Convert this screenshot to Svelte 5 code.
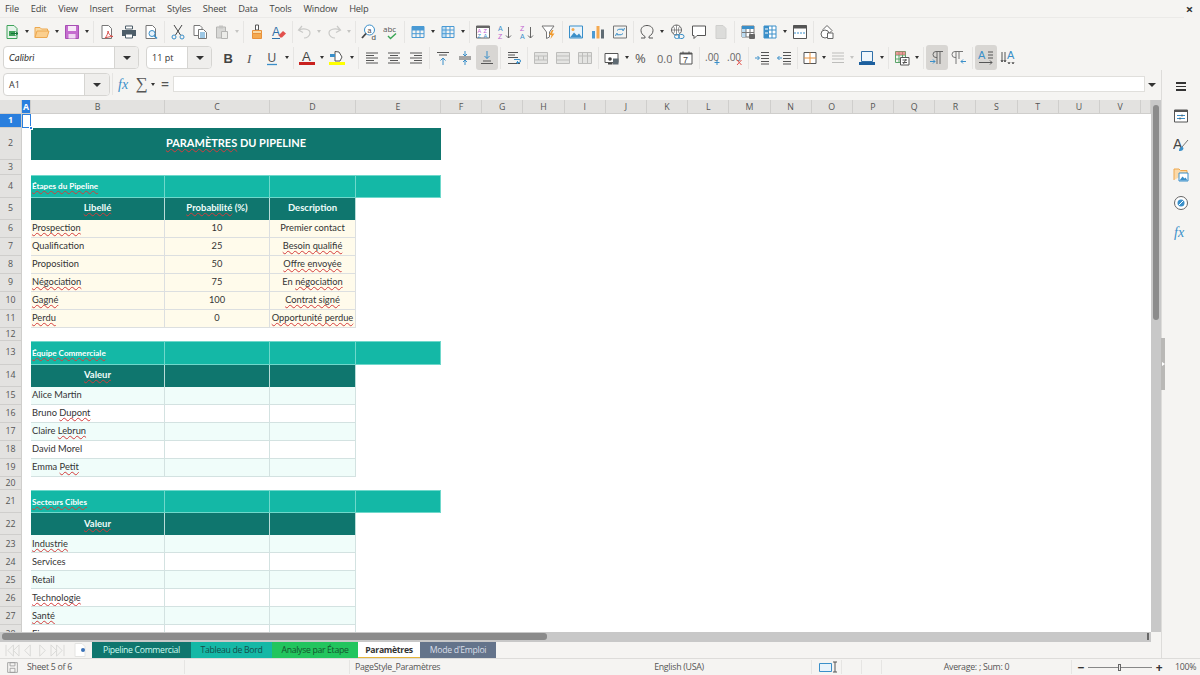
<script>
	const menus = ['File', 'Edit', 'View', 'Insert', 'Format', 'Styles', 'Sheet', 'Data', 'Tools', 'Window', 'Help'];

	// toolbar tokens: a = drop arrow, ag = greyed drop arrow, | = separator, the rest are icon names
	const bar1 = 'new a open a save a | pdf print preview | cut copy paste ag | clone clear | undo ag redo ag | find spell | rows a cols a | sort asc desc filter | image chart pivot | omega a link comment note | freeze freezecol a split | shapes'.split(' ');
	const bar2 = 'bold italic under a | fcolor a hilite a | left center right | top mid bottom | wrap | merge mergec unmerge | money a percent number date | adddec deldec | indent outdent | border a bstyle ag bcolor a | cond a | ltr rtl | tb tbv'.split(' ');
	const narrow = ['undo', 'border', 'bstyle'];
	const active = ['bottom', 'ltr', 'tb'];
	const side = ['props', 'styles', 'gallery', 'navigator', 'functions'];

	const line = (x1, y1, x2, y2, c = '#555') => `<path d="M${x1} ${y1}L${x2} ${y2}" stroke="${c}" fill="none"/>`;
	const lines = (rows, c = '#555') => rows.map(r => line(r[0], r[1], r[2], r[1], c)).join('');
	const grid = c => `<path d="M2 2.500h12v11H2zM2 6h12M2 9.700h12M6 2.500v11M10 2.500v11" stroke="${c}" fill="none"/>`;

	const icons = {
		new: `<path d="M3 1.500h7l3 3v10H3z" fill="#e6f4ea" stroke="#3fa35a"/><path d="M5 7h6v5H5z" fill="#3fa35a"/><path d="M7 9.500h7M11.500 7.500l2.500 2-2.500 2" stroke="#16763a" fill="none"/>`,
		open: `<path d="M1 13.500v-10h5l1.500 1.500h6v2" fill="#f8d9a4" stroke="#eda84f"/><path d="M1 13.500l2-6.500h12l-2 6.500z" fill="#fbcf8e" stroke="#eda84f"/>`,
		save: `<path d="M1.500 1.500h13v13h-13z" fill="#c56ccf" stroke="#a64fb3"/><path d="M4 2h8v5H4z" fill="#f7e8f8"/><path d="M4.500 10h7v4.500h-7z" fill="#f0d7f2"/>`,
		pdf: `<path d="M3 1.500h6.500l3 3v10H3z" fill="#fff" stroke="#777"/><path d="M6 14c2-2 3-5 3-7 .5 3 2 5 5 5.500-3 0-5 .5-8 1.500z" fill="none" stroke="#d9534f"/>`,
		print: `<path d="M4.500 2h7v3h-7z" fill="#fff" stroke="#4d5d68"/><path d="M1 6h14v6H1z" fill="#4d5d68"/><path d="M4.500 10h7v4h-7z" fill="#fff" stroke="#4d5d68"/>`,
		preview: `<path d="M3 1.500h6.500l3 3v10H3z" fill="#fff" stroke="#777"/><circle cx="9" cy="9.500" r="3" fill="#e8f3fb" stroke="#3a8fc9"/><path d="M11 11.500l3 3" stroke="#3a8fc9" stroke-width="1.500"/>`,
		cut: `<path d="M4 1l6.500 10M12 1L5.500 11" stroke="#444" fill="none"/><circle cx="4" cy="13" r="2" fill="none" stroke="#3a8fc9"/><circle cx="12" cy="13" r="2" fill="none" stroke="#3a8fc9"/>`,
		copy: `<path d="M2 1.500h6l2 2v8H2z" fill="#fff" stroke="#777"/><path d="M6.500 5.500h5l3 3v6h-8z" fill="#fff" stroke="#777"/>${lines([[8, 9, 13], [8, 11, 13], [8, 13, 13]], '#3a8fc9')}`,
		paste: `<path d="M2.500 3h9v11h-9z" fill="#d8d8d6" stroke="#b5b5b3"/><path d="M5 1.500h4v3H5z" fill="#c4c4c2"/><path d="M7.500 7.500h6v7h-6z" fill="#ecece9" stroke="#b5b5b3"/>`,
		clone: `<path d="M6.500 1h3v5h-3z" fill="#fff" stroke="#555"/><path d="M3.500 6.500h9v3h-9z" fill="#f8d9a4" stroke="#e8913a"/><path d="M3.500 9.500h9v5h-9z" fill="#f4a950" stroke="#e8913a"/>`,
		clear: `<text x="1" y="12" font-size="12" font-family="Liberation Sans" fill="#2f6fa8">A</text><path d="M8 11l4-4 3 2.500-4 4H9z" fill="#e2504c"/><path d="M1 14.500h8" stroke="#2f6fa8"/>`,
		undo: `<path d="M5 2L1.500 6 6 8.500M2 6c5-2 11-1 11 3 0 3-3 5-6 5" stroke="#c9c9c7" fill="none" stroke-width="1.200"/>`,
		redo: `<path d="M11 2l3.500 4L10 8.500M14 6C9 4 3 5 3 9c0 3 3 5 6 5" stroke="#c9c9c7" fill="none" stroke-width="1.200"/>`,
		find: `<circle cx="8.500" cy="6" r="5" fill="#fff" stroke="#3a8fc9"/><path d="M5 9.500l-4 4.500" stroke="#444" stroke-width="1.800"/><text x="6.500" y="8.500" font-size="7" font-family="Liberation Sans" fill="#444">a</text><text x="10.500" y="15.500" font-size="8" font-family="Liberation Sans" fill="#444">d</text>`,
		spell: `<text x="0" y="8" font-size="8" font-family="Open Sans" fill="#555">abc</text><path d="M5 12l2.500 2.500L13 9.500" stroke="#3aa655" fill="none" stroke-width="1.400"/>`,
		rows: `<path d="M2 2.500h12v3.500H2z" fill="#4a9ad4"/>${grid('#4a9ad4')}`,
		cols: `<path d="M2 2.500h4v11H2z" fill="#bcdcf2"/>${grid('#4a9ad4')}`,
		sort: `<path d="M1.500 2h13v12h-13z" fill="#fff" stroke="#666"/><path d="M1.500 2h13v2h-13z" fill="#666"/><text x="2.500" y="9" font-size="5.500" font-family="Liberation Sans" fill="#c05fd0">A</text><text x="8.500" y="9" font-size="5.500" font-family="Liberation Sans" fill="#c05fd0">Z</text><text x="2.500" y="14" font-size="5.500" font-family="Liberation Sans" fill="#3a8fc9">Z</text><text x="8.500" y="14" font-size="5.500" font-family="Liberation Sans" fill="#3a8fc9">A</text>`,
		asc: `<text x="1" y="7" font-size="7" font-family="Liberation Sans" fill="#3a8fc9">A</text><text x="1" y="14.500" font-size="7" font-family="Liberation Sans" fill="#c05fd0">Z</text><path d="M11.500 3v11M9 11.500l2.500 2.500 2.500-2.500" stroke="#666" fill="none"/>`,
		desc: `<text x="1" y="7" font-size="7" font-family="Liberation Sans" fill="#c05fd0">Z</text><text x="1" y="14.500" font-size="7" font-family="Liberation Sans" fill="#3a8fc9">A</text><path d="M11.500 3v11M9 11.500l2.500 2.500 2.500-2.500" stroke="#666" fill="none"/>`,
		filter: `<path d="M1 2h12L8.500 8v5l-3 1.500V8z" fill="#fff" stroke="#777"/><path d="M11 6l-3 5h2.500l-1 4 4-5.500h-2.500l1.500-3.500z" fill="#f09a2e"/>`,
		image: `<path d="M1.500 2h13v12h-13z" fill="#eaf4fb" stroke="#3a8fc9"/><circle cx="5" cy="5.500" r="1.500" fill="#f4a950"/><path d="M2 13.500l4-5 3 3 2-2 3 4z" fill="#3a8fc9"/>`,
		chart: `<path d="M2 7h3v7.500H2z" fill="#4a9ad4"/><path d="M6.500 2h3v12.500h-3z" fill="#f4a950"/><path d="M11 5.500h3v9h-3z" fill="#5f6b73"/>`,
		pivot: `<path d="M1.500 2h13v12h-13z" fill="#f2f2f0" stroke="#777"/><path d="M5 6.500a4 4 0 0 1 6 0M11 9.500a4 4 0 0 1-6 0" stroke="#3a8fc9" fill="none"/><path d="M10 4.500l1.500 2 1-2.500M6 11.500l-1.500-2-1 2.500" stroke="#3a8fc9" fill="none"/>`,
		omega: `<path d="M2 14h4v-1.500C3.500 11 2 9 2 6.500 2 3.500 4.500 1.500 8 1.500s6 2 6 5c0 2.500-1.500 4.500-4 6V14h4" stroke="#555" fill="none"/>`,
		link: `<circle cx="7.500" cy="6" r="5" fill="#fff" stroke="#666"/><path d="M2.500 6h10M7.500 1v10M4.500 2.500c1.500 2 1.500 5 0 7M10.500 2.500c-1.500 2-1.500 5 0 7" stroke="#666" fill="none" stroke-width=".7"/><rect x="5.500" y="10.500" width="5" height="4" rx="2" fill="none" stroke="#3a8fc9"/><rect x="9.500" y="10.500" width="5.500" height="4" rx="2" fill="none" stroke="#3a8fc9"/>`,
		comment: `<path d="M1.500 2h13v9.500H6L3 14.500v-3H1.500z" fill="#fff" stroke="#555"/>`,
		note: `<path d="M3 1.500h7l3 3v10H3z" fill="#dcdcda" stroke="#cfcfcd"/>`,
		freeze: `<path d="M2 2h12v11H2z" fill="#fff" stroke="#777"/><path d="M2 2h12v3H2z" fill="#3a8fc9"/><path d="M2 5h4v8H2z" fill="#bcdcf2"/><path d="M2 8.500h12M6 5v8M10 5v8" stroke="#777" fill="none"/><rect x="9" y="10" width="6" height="5" rx="1" fill="#666"/>`,
		freezecol: `<path d="M2 2h12v12H2z" fill="#fff" stroke="#3a8fc9"/><path d="M2 2h5v12H2z" fill="#3a8fc9"/><path d="M2 6h12M2 10h12M10 2v12" stroke="#3a8fc9" fill="none"/><path d="M3 5h3M3 9h3" stroke="#fff" fill="none"/>`,
		split: `<path d="M1.500 1.500h13v13h-13z" fill="#fff" stroke="#555"/><path d="M1.500 1.500h13v3h-13z" fill="#555"/><path d="M2 9h12" stroke="#3a8fc9" stroke-dasharray="2 1" fill="none"/>`,
		shapes: `<path d="M8 1.500l5 5-4 4-5-5z" fill="#fff" stroke="#666"/><circle cx="6" cy="10" r="4" fill="#fff" stroke="#666"/><path d="M8.500 9h5.500v5.500H8.500z" fill="#fff" stroke="#666"/>`,

		bold: `<text x="3.500" y="13" font-size="13" font-weight="700" font-family="Liberation Sans" fill="#444">B</text>`,
		italic: `<text x="5" y="13" font-size="13" font-style="italic" font-family="Liberation Serif" fill="#555">I</text>`,
		under: `<text x="3.500" y="11.500" font-size="12" font-family="Liberation Sans" fill="#555">U</text><path d="M3 14.500h10" stroke="#3a8fc9" stroke-width="1.300"/>`,
		fcolor: `<text x="3" y="11" font-size="13" font-family="Liberation Sans" fill="#444">A</text><path d="M0 12h16v3H0z" fill="#c9211e"/>`,
		hilite: `<path d="M6 1.500l4 .5 3 5-2 4H6z" fill="#fff" stroke="#555"/><path d="M1 4h5v3H1z" fill="#3a8fc9"/><path d="M0 12h16v3H0z" fill="#ffff00"/>`,
		left: lines([[2, 3, 14], [2, 5.500, 10], [2, 8, 14], [2, 10.500, 10], [2, 13, 14]]),
		center: lines([[2, 3, 14], [4, 5.500, 12], [2, 8, 14], [4, 10.500, 12], [2, 13, 14]]),
		right: lines([[2, 3, 14], [6, 5.500, 14], [2, 8, 14], [6, 10.500, 14], [2, 13, 14]]),
		top: `${lines([[2, 2.500, 14], [4, 5, 12]])}<path d="M8 15V8M5.500 10.500L8 8l2.500 2.500" stroke="#3a8fc9" fill="none"/>`,
		mid: `${lines([[2, 7, 14], [2, 9, 14]])}<path d="M8 1v5M6 4l2 2 2-2M8 15v-5M6 12l2-2 2 2" stroke="#3a8fc9" fill="none"/>`,
		bottom: `${lines([[4, 11, 12], [2, 13.500, 14]])}<path d="M8 1v7.500M5.500 6L8 8.500 10.500 6" stroke="#3a8fc9" fill="none"/>`,
		wrap: `${lines([[2, 2.500, 12], [2, 5, 9], [2, 7.500, 12], [2, 13.500, 14]])}<path d="M8 9.500h5a1.500 1.500 0 0 1 0 3h-2M12 11l-1.500 1.500L12 14" stroke="#3a8fc9" fill="none"/>`,
		merge: `<path d="M1.500 2.500h13v11h-13zM1.500 6h13M1.500 10h13M5.500 6v4M10.500 6v4" fill="#e4e4e2" stroke="#bdbdbb"/>`,
		mergec: `<path d="M1.500 2.500h13v11h-13zM1.500 6h13M1.500 10h13" fill="#e4e4e2" stroke="#bdbdbb"/>`,
		unmerge: `<path d="M1.500 2.500h13v11h-13zM1.500 6h13M5.500 2.500v11M10.500 2.500v11" fill="#e4e4e2" stroke="#bdbdbb"/>`,
		money: `<path d="M1 3.500h13v9H1z" fill="#fff" stroke="#555"/><circle cx="6" cy="9" r="1.800" fill="#444"/><path d="M9 8.500h5.500v6H9z" fill="#5f6b73"/><path d="M4 13h4.500v1.500H4z" fill="#444"/>`,
		percent: `<text x="1" y="13" font-size="13" font-family="Open Sans" fill="#555">%</text>`,
		number: `<text x="1" y="13" font-size="11" font-family="Open Sans" fill="#666">0.0</text>`,
		date: `<path d="M2 3h12v11H2z" fill="#fff" stroke="#555"/><path d="M2 3h12v1.500H2z" fill="#555"/><path d="M5 1.500v2M11 1.500v2" stroke="#555"/><text x="5" y="13" font-size="9" font-family="Liberation Sans" fill="#444">7</text>`,
		adddec: `<text x="0" y="11" font-size="10" font-family="Open Sans" fill="#666">.00</text><path d="M12 10v5M9.500 12.500h5" stroke="#3a8fc9" fill="none"/>`,
		deldec: `<text x="0" y="11" font-size="10" font-family="Open Sans" fill="#666">.00</text><path d="M10 10l4.500 5M14.500 10L10 15" stroke="#e2504c" fill="none"/>`,
		indent: `${lines([[7, 2.500, 15], [7, 5.500, 15], [7, 8.500, 15], [7, 11.500, 15], [7, 14, 15]])}<path d="M1 8h4M3.500 6L5.500 8l-2 2" stroke="#3a8fc9" fill="none"/>`,
		outdent: `${lines([[7, 2.500, 15], [7, 5.500, 15], [7, 8.500, 15], [7, 11.500, 15], [7, 14, 15]])}<path d="M6 8H1.500M3.500 6L1.500 8l2 2" stroke="#3a8fc9" fill="none"/>`,
		border: `<path d="M2 2.500h12v11H2z" fill="#fff" stroke="#555"/><path d="M8 2.500v11M2 8h12" stroke="#e8913a" fill="none"/>`,
		bstyle: lines([[2, 3, 14], [2, 6, 14], [2, 9, 14], [2, 12.500, 14]], '#bdbdbb'),
		bcolor: `<path d="M2.500 1.500h11v10h-11z" fill="#eef6fc" stroke="#2f6fa8"/><path d="M0 12h16v3H0z" fill="#1c5f9e"/>`,
		cond: `<path d="M1.500 1.500h10v11h-10zM1.500 5h10M1.500 9h10M5 1.500v11M8.500 1.500v11" fill="none" stroke="#5aa469"/><path d="M1.500 1.500h10v3.500h-10z" fill="#e57373" opacity=".7"/><path d="M6.500 7.500h8.500v7.500H6.500z" fill="#fff" stroke="#555"/><path d="M8.500 10h4.500M8.500 12.500h4.500M12 9l-2.500 5" stroke="#555" fill="none"/>`,
		ltr: `<path d="M8 2v12M11 2v12M14 1.500H7a3 3 0 0 0 0 6h1" stroke="#666" fill="none"/><path d="M1 11.500h5M4 9.500l2 2-2 2" stroke="#3a8fc9" fill="none"/>`,
		rtl: `<path d="M5 2v12M8 2v7M12 1.500H4a3 3 0 0 0 0 6h1" stroke="#777" fill="none"/><path d="M15 11.500h-5M12 9.500l-2 2 2 2" stroke="#3a8fc9" fill="none"/>`,
		tb: `<text x="0" y="9" font-size="11" font-family="Liberation Sans" fill="#3a8fc9">A</text><path d="M10 2h5M10 5h5M10 8h5M1 12.500h13M12 10.500l2 2-2 2" stroke="#555" fill="none"/>`,
		tbv: `<text x="7" y="9" font-size="11" font-family="Liberation Sans" fill="#3a8fc9">A</text><path d="M2 2v10M5 2v10M1 10l1 2 1-2M4 10l1 2 1-2M8 12l1 2 1-2M12 12l1 2 1-2" stroke="#555" fill="none"/>`,

		props: `<path d="M1.500 2h13v12h-13z" fill="#fff" stroke="#555"/><path d="M1.500 2h13v2h-13z" fill="#555"/><path d="M4 7.500h8M4 10.500h8" stroke="#3a8fc9" fill="none"/><path d="M9 6.500v2M7 9.500v2" stroke="#555" fill="none"/>`,
		styles: `<text x="0" y="12" font-size="14" font-family="Liberation Sans" fill="#444">A</text><path d="M15 3l-6 7" stroke="#777" fill="none"/><path d="M6 14c0-3 1.500-4 3-4.500l1.500 1.500c0 2-2 3.500-4.500 3z" fill="#3a8fc9"/>`,
		gallery: `<path d="M1 14V3h5l1.500 1.500H14V7" fill="#fbd9a8" stroke="#eda84f"/><path d="M6 7h9v8H6z" fill="#fff" stroke="#3a8fc9"/><path d="M6.500 14.500l3-4 2 2 1-1 2 3z" fill="#3a8fc9"/>`,
		navigator: `<circle cx="8" cy="8" r="6.500" fill="#fff" stroke="#666"/><circle cx="8" cy="8" r="3.500" fill="#3a8fc9"/><path d="M5.500 10.500l5-5" stroke="#fff"/>`,
		functions: `<text x="1" y="13" font-size="14" font-style="italic" font-family="Liberation Serif" fill="#3a8fc9">fx</text>`
	};

	const cols = ['F', 'G', 'H', 'I', 'J', 'K', 'L', 'M', 'N', 'O', 'P', 'Q', 'R', 'S', 'T', 'U', 'V', ''];

	const w = t => `<span class="sp">${t}</span>`;
	const band = (n, title) => ({ n, h: 23.3, kind: 'band', cells: [w(title), '', '', ''] });
	const head = (n, cells) => ({ n, h: 22, kind: 'head', cells });
	const gap = (n, h) => ({ n, h, kind: 'gap', cells: [] });
	const row = (n, kind, cells) => ({ n, h: 18, kind, cells });

	const rows = [
		gap(1, 13.7),
		{ n: 2, h: 32.6, kind: 'title', cells: [w('PARAMÈTRES') + ' DU PIPELINE'] },
		gap(3, 14.4),
		band(4, 'Étapes du Pipeline'),
		head(5, [w('Libellé'), w('Probabilité') + ' (%)', 'Description']),
		row(6, 'y', [w('Prospection'), '10', 'Premier contact']),
		row(7, 'y', ['Qualification', '25', w('Besoin qualifié')]),
		row(8, 'y', ['Proposition', '50', w('Offre envoyée')]),
		row(9, 'y', [w('Négociation'), '75', 'En ' + w('négociation')]),
		row(10, 'y', [w('Gagné'), '100', w('Contrat signé')]),
		row(11, 'y', [w('Perdu'), '0', w('Opportunité perdue')]),
		gap(12, 13.3),
		band(13, 'Équipe Commerciale'),
		head(14, [w('Valeur'), '', '']),
		row(15, 'm', ['Alice Martin', '', '']),
		row(16, 'w', ['Bruno ' + w('Dupont'), '', '']),
		row(17, 'm', ['Claire ' + w('Lebrun'), '', '']),
		row(18, 'w', ['David Morel', '', '']),
		row(19, 'm', ['Emma ' + w('Petit'), '', '']),
		gap(20, 13.3),
		band(21, 'Secteurs Cibles'),
		head(22, [w('Valeur'), '', '']),
		row(23, 'm', [w('Industrie'), '', '']),
		row(24, 'w', ['Services', '', '']),
		row(25, 'm', ['Retail', '', '']),
		row(26, 'w', [w('Technologie'), '', '']),
		row(27, 'm', [w('Santé'), '', '']),
		row(28, 'w', ['Finance', '', ''])
	];

	const gridRows = '14px ' + rows.map(r => r.h + 'px').join(' ');

	const tabs = [
		{ name: 'Pipeline Commercial', cls: 't1' },
		{ name: 'Tableau de Bord', cls: 't2' },
		{ name: 'Analyse par Étape', cls: 't3' },
		{ name: 'Paramètres', cls: 't4' },
		{ name: "Mode d'Emploi", cls: 't5' }
	];

	const navIcons = ['M1 1v12M9 1L3 7l6 6zM15 1L9 7l6 6z', 'M11 1L5 7l6 6z', 'M5 1l6 6-6 6z', 'M1 1l6 6-6 6zM7 1l6 6-6 6zM15 1v12'];
</script>

<div class="app">
	<div class="menubar">
		{#each menus as m}<span>{m}</span>{/each}
		<span class="close">×</span>
	</div>

	<div class="tb tb1">
		{#each bar1 as t}
			{#if t === 'a' || t === 'ag'}
				<i class="arrow" class:grey={t === 'ag'}></i>
			{:else if t === '|'}
				<i class="sep"></i>
			{:else}
				<div class="btn" class:narrow={narrow.includes(t)}>
					<svg viewBox="0 0 16 16" width="16" height="16">{@html icons[t]}</svg>
				</div>
			{/if}
		{/each}
	</div>

	<div class="tb tb2">
		<div class="combo fontname"><span class="val it">Calibri</span><b><i class="arrow big"></i></b></div>
		<div class="combo fontsize"><span class="val">11 pt</span><b><i class="arrow big"></i></b></div>
		{#each bar2 as t}
			{#if t === 'a' || t === 'ag'}
				<i class="arrow" class:grey={t === 'ag'}></i>
			{:else if t === '|'}
				<i class="sep"></i>
			{:else}
				<div class="btn" class:narrow={narrow.includes(t)} class:on={active.includes(t)}>
					<svg viewBox="0 0 16 16" width="16" height="16">{@html icons[t]}</svg>
				</div>
			{/if}
		{/each}
	</div>

	<div class="lower">
		<div class="work">
			<div class="formula">
				<div class="combo namebox"><span class="val">A1</span><b><i class="arrow big"></i></b></div>
				<i class="sep"></i>
				<div class="fbtn fx"><svg viewBox="0 0 16 16" width="16" height="16">{@html icons.functions}</svg></div>
				<div class="fbtn sigma">∑</div>
				<i class="arrow"></i>
				<div class="fbtn eq">=</div>
				<div class="finput"></div>
				<i class="arrow big"></i>
			</div>

			<div class="sheetrow">
				<div class="grid" style="grid-template-rows: {gridRows}">
					<div class="ch corner"></div>
					<div class="ch sel">A</div>
					<div class="ch">B</div>
					<div class="ch">C</div>
					<div class="ch">D</div>
					<div class="ch">E</div>
					{#each cols as c}<div class="ch">{c}</div>{/each}

					{#each rows as r}
						<div class="rh" class:selrow={r.n === 1}>{r.n}</div>
						<div class="cola" class:cursor={r.n === 1}></div>
						{#if r.kind === 'title'}
							<div class="c title">{@html r.cells[0]}</div>
						{:else}
							{#each r.cells as text, i}
								<div class="c {r.kind}" class:first={i === 0} class:mid={i > 0}>{@html text}</div>
							{/each}
						{/if}
					{/each}
				</div>
				<div class="vbar"><div class="vthumb"></div></div>
			</div>

			<div class="hbar"><div class="hthumb"></div><i class="hmark"></i></div>

			<div class="tabbar">
				<div class="nav">
					{#each navIcons as d}
						<svg viewBox="0 0 16 14" width="15" height="13"><path d={d} fill="none" stroke="#d8d8d6" /></svg>
					{/each}
				</div>
				<div class="addsheet">
					<svg viewBox="0 0 12 16" width="12" height="16"><path d="M1 1.500h7l3 3v10H1z" fill="#fff" stroke="#e4e4e2" /><circle cx="9" cy="8" r="2" fill="#3a72b8" /></svg>
				</div>
				{#each tabs as t}<div class="tab {t.cls}">{t.name}</div>{/each}
			</div>
		</div>

		<div class="sidebar">
			<div class="hamb"><i></i><i></i><i></i></div>
			{#each side as s}
				<svg viewBox="0 0 16 16" width="16" height="16">{@html icons[s]}</svg>
			{/each}
			<div class="handle"></div>
		</div>
	</div>

	<div class="status">
		<div class="st s0">
			<svg viewBox="0 0 16 16" width="13" height="13"><path d="M2 2h12v12H2z" fill="none" stroke="#999" /><path d="M5 2h6v4H5zM5 9h6v5H5z" fill="none" stroke="#999" /></svg>
			<span>Sheet 5 of 6</span>
		</div>
		<div class="st s1"></div>
		<div class="st s2">PageStyle_Paramètres</div>
		<div class="st s3">English (USA)</div>
		<div class="st s4"></div>
		<div class="st s5">
			<svg viewBox="0 0 22 12" width="22" height="12"><path d="M1.500 2.500h12v8h-12z" fill="#e8f3fb" stroke="#3a8fc9" /><path d="M15 1h4M15 11h4M17 1v10" stroke="#555" fill="none" /></svg>
		</div>
		<div class="st s6"></div>
		<div class="st s7"></div>
		<div class="st s8">Average: ; Sum: 0</div>
		<div class="st s9">
			<span class="zm">−</span>
			<div class="slider"><i></i></div>
			<span class="zm">+</span>
			<span class="pct">100%</span>
		</div>
	</div>
</div>

<style>
	:global(body) {
		margin: 0;
		overflow: hidden;
	}
	.app {
		width: 1200px;
		height: 675px;
		background: #f5f4f2;
		display: flex;
		flex-direction: column;
		font-family: "Open Sans", "Noto Sans", sans-serif;
		font-size: 9.5px;
		color: #444;
		overflow: hidden;
	}
	svg {
		display: block;
		flex: none;
	}
	i {
		display: block;
		flex: none;
	}

	.menubar {
		height: 17px;
		border-bottom: 1px solid #ebeae8;
		display: flex;
		align-items: center;
		padding-left: 5px;
		gap: 11.800px;
		font-size: 9.300px;
		letter-spacing: -0.200px;
		margin-right: 16px;
	}
	.close {
		margin-left: auto;
		margin-right: -9px;
		font-size: 13px;
		font-weight: 700;
		color: #333;
	}

	.tb {
		display: flex;
		align-items: center;
		padding-left: 1px;
	}
	.tb1 {
		height: 27px;
	}
	.tb2 {
		height: 25px;
		padding-left: 3px;
	}
	.btn {
		width: 22px;
		height: 25px;
		display: flex;
		align-items: center;
		justify-content: center;
		flex: none;
		border-radius: 3px;
	}
	.btn.narrow {
		width: 20px;
	}
	.btn.on {
		background: #d8d6d3;
	}
	.arrow {
		width: 8px;
		height: 3px;
	}
	.arrow::after {
		content: "";
		display: block;
		width: 0;
		height: 0;
		margin: 0 auto;
		border-left: 2.500px solid transparent;
		border-right: 2.500px solid transparent;
		border-top: 3px solid #333;
	}
	.arrow.grey::after {
		border-top-color: #c4c4c2;
	}
	.arrow.big::after {
		border-left-width: 4px;
		border-right-width: 4px;
		border-top-width: 4px;
	}
	.sep {
		width: 5px;
		height: 22px;
		background: linear-gradient(#e6e5e3, #e6e5e3) center / 1px 100% no-repeat;
	}

	.combo {
		display: flex;
		height: 23px;
		box-sizing: border-box;
		border: 1px solid #d6d5d2;
		border-radius: 4px;
		background: #fff;
		overflow: hidden;
		flex: none;
	}
	.combo .val {
		flex: 1;
		padding-left: 5px;
		line-height: 21px;
		font-size: 9px;
		color: #333;
	}
	.combo .it {
		font-family: Lato, sans-serif;
		font-style: italic;
		font-size: 9.500px;
	}
	.combo b {
		width: 23px;
		background: #efeeec;
		border-left: 1px solid #d6d5d2;
		display: flex;
		align-items: center;
		justify-content: center;
	}
	.fontname {
		width: 136px;
		margin-right: 7px;
	}
	.fontsize {
		width: 66px;
		margin-right: 5px;
	}

	.lower {
		flex: 1;
		display: flex;
		min-height: 0;
	}
	.work {
		width: 1161px;
		display: flex;
		flex-direction: column;
		border-right: 1px solid #dddcda;
	}
	.formula {
		height: 30px;
		display: flex;
		align-items: center;
		padding-left: 3px;
		box-sizing: border-box;
		padding-bottom: 2px;
	}
	.namebox {
		width: 107px;
	}
	.namebox b {
		width: 24px;
	}
	.fbtn {
		display: flex;
		justify-content: center;
		color: #555;
		flex: none;
	}
	.fx {
		width: 19px;
	}
	.sigma {
		font-size: 17px;
		width: 15px;
		line-height: 16px;
		font-family: "Liberation Serif", serif;
	}
	.eq {
		font-size: 14px;
		font-weight: 600;
		width: 16px;
		line-height: 16px;
	}
	.finput {
		width: 972px;
		height: 16px;
		margin-right: 3px;
		background: #fff;
		border: 1px solid #e0dfdc;
		box-sizing: border-box;
		flex: none;
	}

	.sheetrow {
		height: 532px;
		display: flex;
	}
	.grid {
		width: 1151px;
		height: 532px;
		flex: none;
		background: #fff;
		display: grid;
		grid-template-columns: 22px 9px 134px 105px 86px 85px repeat(17, 41.200px) 10px;
		align-content: start;
		overflow: hidden;
		font-family: Lato, sans-serif;
		font-size: 9.300px;
		color: #333;
	}
	.ch,
	.rh {
		background: #e3e2e0;
		box-sizing: border-box;
		border-right: 1px solid #cfcecc;
		border-bottom: 1px solid #cfcecc;
		font-family: "Open Sans", sans-serif;
		font-size: 8.800px;
		color: #555;
		display: flex;
		align-items: center;
		justify-content: center;
		overflow: hidden;
	}
	.rh {
		grid-column: 1;
	}
	.ch.sel,
	.rh.selrow {
		background: #2a7fde;
		color: #fff;
		font-weight: 700;
	}
	.cola {
		background: #fff;
	}
	.cursor {
		position: relative;
		box-shadow: inset 0 0 0 1px #2a7fde;
	}
	.cursor::after {
		content: "";
		position: absolute;
		right: -2px;
		bottom: -2px;
		width: 4px;
		height: 4px;
		background: #2a7fde;
		border: 1px solid #fff;
		box-sizing: border-box;
		z-index: 2;
	}
	.c {
		box-sizing: border-box;
		display: flex;
		align-items: center;
		white-space: pre;
		overflow: hidden;
		min-width: 0;
	}
	.c :global(.sp) {
		text-decoration: underline wavy #d43c3c 0.600px;
		text-underline-offset: 0.500px;
		text-decoration-skip-ink: none;
	}
	.c.first {
		padding-left: 1px;
	}
	.c.mid {
		justify-content: center;
	}
	.title {
		grid-column: span 4;
		background: #0f766e;
		color: #fff;
		font-weight: 700;
		font-size: 11px;
		justify-content: center;
		padding-bottom: 2px;
	}
	.band {
		background: #14b8a6;
		color: #fff;
		font-weight: 700;
		font-size: 8.100px;
		border-right: 1px solid #6fd8cb;
		border-top: 1px solid #6fd8cb;
		border-bottom: 1px solid #6fd8cb;
	}
	.head {
		background: #0f766e;
		color: #f0fdfa;
		font-weight: 700;
		font-size: 9.500px;
		justify-content: center;
		border-right: 1px solid #b9dcd8;
		padding-bottom: 2px;
	}
	.head.first {
		padding-left: 0;
	}
	.y,
	.m,
	.w {
		border-right: 1px solid #dcdfe0;
		border-bottom: 1px solid #dcdfe0;
		padding-bottom: 1px;
	}
	.y {
		background: #fffbeb;
	}
	.m {
		background: #f0fdfa;
		border-color: #d3e2e1;
	}
	.w {
		background: #fff;
		border-color: #d3e2e1;
	}

	.vbar {
		width: 10px;
		height: 532px;
		background: #c8c8c8;
		box-sizing: border-box;
		padding: 5px 2px 0;
	}
	.vthumb {
		height: 215px;
		background: #8b8b8b;
		border-radius: 3px;
	}
	.hbar {
		height: 10px;
		width: 1151px;
		background: #c8c8c8;
		box-sizing: border-box;
		padding: 1px 0 0 2px;
		display: flex;
		align-items: flex-start;
		justify-content: space-between;
	}
	.hthumb {
		width: 545px;
		height: 7px;
		background: #8b8b8b;
		border-radius: 3px;
	}
	.hmark {
		width: 2px;
		height: 7px;
		background: #666;
		margin-right: 2px;
	}
	.tabbar {
		height: 16px;
		display: flex;
		align-items: stretch;
	}
	.nav {
		width: 74px;
		padding-left: 5px;
		box-sizing: border-box;
		display: flex;
		align-items: center;
	}
	.addsheet {
		width: 18px;
		display: flex;
		align-items: center;
	}
	.tab {
		display: flex;
		align-items: center;
		justify-content: center;
		font-family: "Open Sans", sans-serif;
		font-size: 8.700px;
		letter-spacing: -0.320px;
		box-sizing: border-box;
	}
	.t1 {
		width: 99px;
		background: #0f766e;
		color: #ccfbf1;
	}
	.t2 {
		width: 81px;
		background: #14b8a6;
		color: #134e4a;
	}
	.t3 {
		width: 86px;
		background: #22c55e;
		color: #14532d;
	}
	.t4 {
		width: 62px;
		background: #fff;
		color: #333;
		font-weight: 700;
		border-bottom: 1px solid #e5b53b;
	}
	.t5 {
		width: 76px;
		background: #64748b;
		color: #d8dee8;
	}

	.sidebar {
		flex: 1;
		position: relative;
		display: flex;
		flex-direction: column;
		align-items: center;
		gap: 13px;
		padding-top: 9px;
		box-sizing: border-box;
	}
	.hamb {
		width: 10px;
		display: flex;
		flex-direction: column;
		gap: 2px;
		margin: 3px 0 4px;
	}
	.hamb i {
		height: 1.500px;
		background: #333;
	}
	.handle {
		position: absolute;
		left: -1px;
		top: 268px;
		width: 4px;
		height: 52px;
		background: #b9b8b6;
	}
	.handle::after {
		content: "";
		position: absolute;
		left: 1px;
		top: 24px;
		border-left: 3px solid #fff;
		border-top: 2.500px solid transparent;
		border-bottom: 2.500px solid transparent;
	}

	.status {
		height: 17px;
		display: flex;
		align-items: center;
		border-top: 1px solid #dddcda;
		box-sizing: border-box;
		font-size: 8.800px;
		letter-spacing: -0.280px;
		color: #555;
	}
	.st {
		height: 14px;
		box-sizing: border-box;
		border-right: 1px solid #e6e5e3;
		display: flex;
		align-items: center;
		flex: none;
	}
	.s0 {
		width: 185px;
		padding-left: 6px;
		gap: 8px;
	}
	.s1 {
		width: 165px;
	}
	.s2 {
		width: 250px;
		padding-left: 5px;
		border: 0;
	}
	.s3 {
		width: 158px;
		justify-content: center;
		border: 0;
	}
	.s4 {
		width: 54px;
	}
	.s5 {
		width: 30px;
		padding-left: 6px;
	}
	.s6 {
		width: 20px;
	}
	.s7 {
		width: 20px;
	}
	.s8 {
		width: 190px;
		justify-content: center;
	}
	.s9 {
		flex: 1;
		border: 0;
		padding-left: 5px;
		gap: 3px;
	}
	.zm {
		width: 8px;
		font-size: 12px;
		font-weight: 700;
		text-align: center;
		color: #333;
	}
	.slider {
		width: 64px;
		height: 1px;
		background: #888;
		position: relative;
	}
	.slider i {
		position: absolute;
		left: 30px;
		top: -3px;
		width: 3px;
		height: 7px;
		background: #eee;
		border: 1px solid #666;
		box-sizing: border-box;
	}
	.pct {
		margin-left: 9px;
	}
</style>
